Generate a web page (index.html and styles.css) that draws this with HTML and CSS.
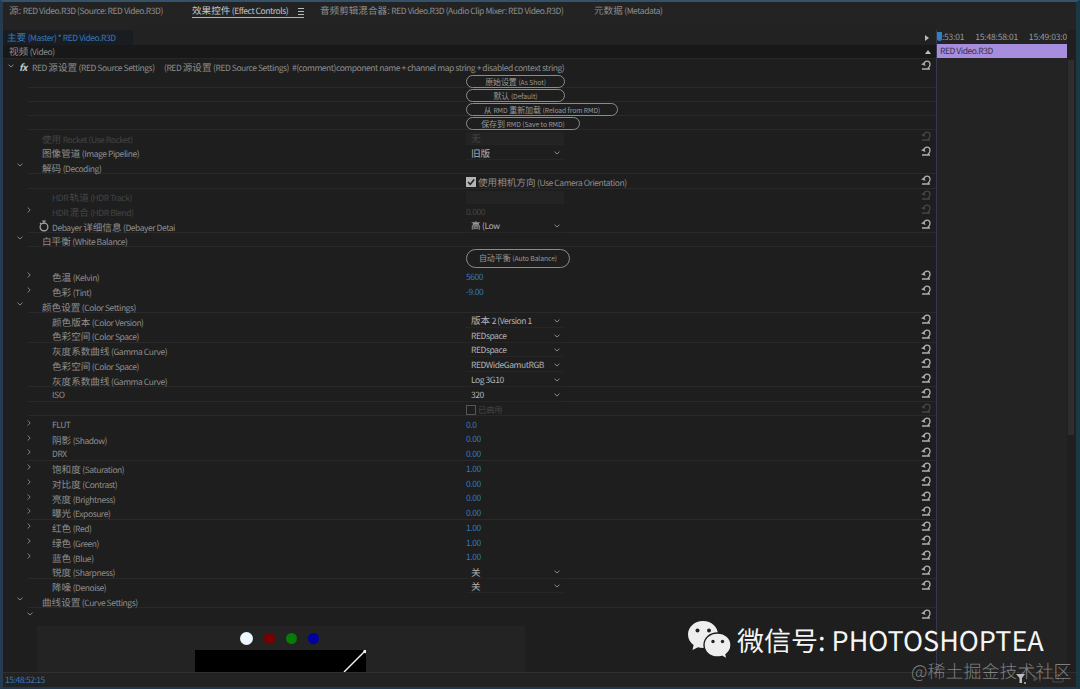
FILE: index.html
```
<!DOCTYPE html>
<html lang="zh-CN">
<head>
  <meta charset="UTF-8" />
  <meta name="viewport" content="width=device-width, initial-scale=1.0"/>
  <title>Effect Controls</title>
  <link rel="stylesheet" href="styles.css">
</head>
<body>

<!-- Shared icons -->
<svg class="defs" width="0" height="0">
  <symbol id="reset" viewBox="0 0 10 10">
    <path d="M2.6 4.4C3.2 2.2 4.4 1.2 6 1.2C8 1.2 9 2.8 9 4.6C9 6.2 8.2 7.4 6.8 8.2M1 9H9" fill="none" stroke="currentColor" stroke-width="1.3"/>
    <path d="M0 4.2L3.2 2.4L4.6 6Z" fill="currentColor"/>
  </symbol>
  <symbol id="down" viewBox="0 0 6 4"><path d="M.5 .7L3 3L5.5 .7" fill="none" stroke="currentColor"/></symbol>
  <symbol id="right" viewBox="0 0 4 6"><path d="M.7 .5L3.2 3L.7 5.5" fill="none" stroke="currentColor"/></symbol>
</svg>

<div class="app">
  <div class="tabs">
    <span class="tab tab-source"><span class="zh">源:</span> RED Video.R3D (Source: RED Video.R3D)</span>
    <span class="tab tab-effect active"><span><span class="zh">效果控件</span> (Effect Controls)</span> <b class="menu"></b></span>
    <span class="tab tab-mixer"><span class="zh">音频剪辑混合器:</span> RED Video.R3D (Audio Clip Mixer: RED Video.R3D)</span>
    <span class="tab tab-meta"><span class="zh">元数据</span> (Metadata)</span>
  </div>

  <div class="main">
    <div class="effects">
      <div class="master"><span class="clip-name"><span class="zh">主要</span> (Master) * RED Video.R3D</span><i class="tri-right"></i></div>
      <div class="video"><span><span class="zh">视频</span> (Video)</span><i class="tri-up"></i></div>
      <div class="row fx">
        <div class="label"><svg class="twirl"><use href="#down"/></svg><em>fx</em><span class="fx-name">RED <span class="zh">源设置</span> (RED Source Settings)</span><span class="fx-desc">(RED <span class="zh">源设置</span> (RED Source Settings)&nbsp; #(comment)component name + channel map string + disabled context string)</span></div>
        <svg class="reset"><use href="#reset"/></svg>
      </div>

      <!-- RMD buttons -->
      <div class="row short line"><div class="label"></div><div class="value"><button class="w98">原始设置 <small>(As Shot)</small></button></div></div>
      <div class="row short line"><div class="label"></div><div class="value"><button class="w98">默认 <small>(Default)</small></button></div></div>
      <div class="row short line"><div class="label"></div><div class="value"><button class="w151">从 <small>RMD</small> 重新加载 <small>(Reload from RMD)</small></button></div></div>
      <div class="row short line"><div class="label"></div><div class="value"><button class="w113">保存到 <small>RMD (Save to RMD)</small></button></div></div>

      <div class="group decode">
        <div class="row off"><div class="label l1"><span class="zh">使用</span> Rocket (Use Rocket)</div><div class="value"><span class="select empty"><span class="zh">无</span></span></div><svg class="reset"><use href="#reset"/></svg></div>
        <div class="row"><div class="label l1"><span class="zh">图像管道</span> (Image Pipeline)</div><div class="value"><span class="select"><span class="zh">旧版</span><svg><use href="#down"/></svg></span></div><svg class="reset"><use href="#reset"/></svg></div>
        <div class="row line"><div class="label l1"><svg class="twirl"><use href="#down"/></svg><span class="zh">解码</span> (Decoding)</div></div>
        <div class="row line"><div class="label"></div><div class="value"><i class="check on"><svg viewBox="0 0 10 10"><path d="M2 5L4.3 7.3L8.2 2.5"/></svg></i><span class="check-text"><span class="zh">使用相机方向</span> (Use Camera Orientation)</span></div><svg class="reset"><use href="#reset"/></svg></div>
        <div class="row off"><div class="label l2">HDR <span class="zh">轨道</span> (HDR Track)</div><div class="value"><span class="select empty"></span></div><svg class="reset"><use href="#reset"/></svg></div>
        <div class="row off"><div class="label l2"><svg class="twirl side"><use href="#right"/></svg>HDR <span class="zh">混合</span> (HDR Blend)</div><div class="value">0.000</div><svg class="reset"><use href="#reset"/></svg></div>
        <div class="row line"><div class="label l2"><svg class="watch" viewBox="0 0 10 12"><circle cx="5" cy="7" r="3.9"/><path d="M3.2 1H6.8M5 1V3M1 2.8L2 3.8"/></svg>Debayer <span class="zh">详细信息</span> (Debayer Detai</div><div class="value"><span class="select"><span><span class="zh">高</span> (Low</span><svg><use href="#down"/></svg></span></div><svg class="reset"><use href="#reset"/></svg></div>
        <div class="row line"><div class="label l1"><svg class="twirl"><use href="#down"/></svg><span class="zh">白平衡</span> (White Balance)</div></div>
      </div>

      <div class="row tall"><div class="label"></div><div class="value"><button class="auto">自动平衡 <small>(Auto Balance)</small></button></div></div>

      <div class="group">
        <div class="row"><div class="label l2"><svg class="twirl side"><use href="#right"/></svg><span class="zh">色温</span> (Kelvin)</div><div class="value num">5600</div><svg class="reset"><use href="#reset"/></svg></div>
        <div class="row"><div class="label l2"><svg class="twirl side"><use href="#right"/></svg><span class="zh">色彩</span> (Tint)</div><div class="value num">-9.00</div><svg class="reset"><use href="#reset"/></svg></div>
        <div class="row line"><div class="label l1"><svg class="twirl"><use href="#down"/></svg><span class="zh">颜色设置</span> (Color Settings)</div></div>
        <div class="row"><div class="label l2"><span class="zh">颜色版本</span> (Color Version)</div><div class="value"><span class="select"><span><span class="zh">版本</span> 2 (Version 1</span><svg><use href="#down"/></svg></span></div><svg class="reset"><use href="#reset"/></svg></div>
        <div class="row line"><div class="label l2"><span class="zh">色彩空间</span> (Color Space)</div><div class="value"><span class="select">REDspace<svg><use href="#down"/></svg></span></div><svg class="reset"><use href="#reset"/></svg></div>
        <div class="row"><div class="label l2"><span class="zh">灰度系数曲线</span> (Gamma Curve)</div><div class="value"><span class="select">REDspace<svg><use href="#down"/></svg></span></div><svg class="reset"><use href="#reset"/></svg></div>
        <div class="row"><div class="label l2"><span class="zh">色彩空间</span> (Color Space)</div><div class="value"><span class="select">REDWideGamutRGB<svg><use href="#down"/></svg></span></div><svg class="reset"><use href="#reset"/></svg></div>
        <div class="row line"><div class="label l2"><span class="zh">灰度系数曲线</span> (Gamma Curve)</div><div class="value"><span class="select">Log 3G10<svg><use href="#down"/></svg></span></div><svg class="reset"><use href="#reset"/></svg></div>
        <div class="row line"><div class="label l2">ISO</div><div class="value"><span class="select">320<svg><use href="#down"/></svg></span></div><svg class="reset"><use href="#reset"/></svg></div>
        <div class="row line off"><div class="label"></div><div class="value"><i class="check"></i><span class="check-text">已启用</span></div><svg class="reset"><use href="#reset"/></svg></div>
        <div class="row"><div class="label l2"><svg class="twirl side"><use href="#right"/></svg>FLUT</div><div class="value num">0.0</div><svg class="reset"><use href="#reset"/></svg></div>
        <div class="row"><div class="label l2"><svg class="twirl side"><use href="#right"/></svg><span class="zh">阴影</span> (Shadow)</div><div class="value num">0.00</div><svg class="reset"><use href="#reset"/></svg></div>
        <div class="row line"><div class="label l2"><svg class="twirl side"><use href="#right"/></svg>DRX</div><div class="value num">0.00</div><svg class="reset"><use href="#reset"/></svg></div>
        <div class="row"><div class="label l2"><svg class="twirl side"><use href="#right"/></svg><span class="zh">饱和度</span> (Saturation)</div><div class="value num">1.00</div><svg class="reset"><use href="#reset"/></svg></div>
        <div class="row"><div class="label l2"><svg class="twirl side"><use href="#right"/></svg><span class="zh">对比度</span> (Contrast)</div><div class="value num">0.00</div><svg class="reset"><use href="#reset"/></svg></div>
        <div class="row"><div class="label l2"><svg class="twirl side"><use href="#right"/></svg><span class="zh">亮度</span> (Brightness)</div><div class="value num">0.00</div><svg class="reset"><use href="#reset"/></svg></div>
        <div class="row line"><div class="label l2"><svg class="twirl side"><use href="#right"/></svg><span class="zh">曝光</span> (Exposure)</div><div class="value num">0.00</div><svg class="reset"><use href="#reset"/></svg></div>
        <div class="row"><div class="label l2"><svg class="twirl side"><use href="#right"/></svg><span class="zh">红色</span> (Red)</div><div class="value num">1.00</div><svg class="reset"><use href="#reset"/></svg></div>
        <div class="row"><div class="label l2"><svg class="twirl side"><use href="#right"/></svg><span class="zh">绿色</span> (Green)</div><div class="value num">1.00</div><svg class="reset"><use href="#reset"/></svg></div>
        <div class="row"><div class="label l2"><svg class="twirl side"><use href="#right"/></svg><span class="zh">蓝色</span> (Blue)</div><div class="value num">1.00</div><svg class="reset"><use href="#reset"/></svg></div>
        <div class="row line"><div class="label l2"><span class="zh">锐度</span> (Sharpness)</div><div class="value"><span class="select"><span class="zh">关</span><svg><use href="#down"/></svg></span></div><svg class="reset"><use href="#reset"/></svg></div>
        <div class="row"><div class="label l2"><span class="zh">降噪</span> (Denoise)</div><div class="value"><span class="select"><span class="zh">关</span><svg><use href="#down"/></svg></span></div><svg class="reset"><use href="#reset"/></svg></div>
        <div class="row line"><div class="label l1"><svg class="twirl"><use href="#down"/></svg><span class="zh">曲线设置</span> (Curve Settings)</div></div>
      </div>

      <!-- Curve editor -->
      <div class="row curve-row"><div class="label l2"><svg class="twirl"><use href="#down"/></svg></div><svg class="reset"><use href="#reset"/></svg></div>
      <div class="curve">
        <div class="dots"><i class="white"></i><i class="red"></i><i class="green"></i><i class="blue"></i></div>
        <svg class="graph" viewBox="0 0 171 22"><rect width="171" height="22"/><path d="M149 22L170 1"/><circle cx="170" cy="1.5" r="1.7"/></svg>
      </div>
    </div>

    <div class="timeline">
      <div class="ruler"><i class="playhead"></i><span>:53:01</span><span>15:48:58:01</span><span>15:49:03:0</span></div>
      <div class="clip">RED Video.R3D</div>
    </div>
    <div class="scroll"><i></i></div>
  </div>

  <div class="footer">
    <span class="time">15:48:52:15</span>
    <svg class="tools" viewBox="0 0 50 12"><path d="M0 1H9L6 5V10H3.5V5Z" fill="#bbb"/><circle cx="9" cy="10" r="1" fill="#bbb"/><path d="M18 3V8L22 5.5ZM24 2V9" fill="#4a4a4a" stroke="#4a4a4a"/><path d="M37 5V9H47V5M42 7V1M39.5 3.5L42 1L44.5 3.5" fill="none" stroke="#4a4a4a"/></svg>
  </div>
</div>

<div class="wechat">
  <svg viewBox="0 0 44 38">
    <path d="M15 0C6.5 0 0 6 0 13.5C0 18 2.2 21.5 5.6 24L4.5 29L10 26.2C11.6 26.7 13.2 27 15 27C24 27 30 20.5 30 13.5C30 6 23.5 0 15 0Z" fill="#eee"/>
    <path d="M29.5 12C21.5 12 16 17.500 16 24C16 30.500 21.500 36 29.500 36C31.200 36 32.600 35.700 34 35.300L39 38L38 33.500C41 31.200 43 28 43 24C43 17.500 37.500 12 29.500 12Z" fill="#eee" stroke="#1e1e1e" stroke-width="1.4"/>
    <g fill="#222"><circle cx="9.5" cy="9.5" r="2"/><circle cx="21" cy="9.5" r="2"/><circle cx="25" cy="20.5" r="1.7"/><circle cx="34.5" cy="20.5" r="1.7"/></g>
  </svg>
  <span>微信号: PHOTOSHOPTEA</span>
</div>
<div class="credit">@稀土掘金技术社区</div>

</body>
</html>
```

FILE: styles.css
```
* {
  box-sizing: border-box;
}

body {
  margin: 0;
  background: #1e1e1e;
  color: #8e8e8e;
  font: 8.5px/14px "Noto Sans CJK SC", sans-serif;
  letter-spacing: -.45px;
  text-rendering: geometricPrecision;
  white-space: nowrap;
  overflow: hidden;
}

.zh {
  font-size: 9.6px;
  letter-spacing: 0;
}

.defs {
  display: block;
}

.app {
  display: flex;
  flex-direction: column;
  height: 689px;
  border-style: solid;
  border-width: 2px 4px 2px 3px;
  border-color: #35526b #1c3745 #1f3850 #243b50;
}

.tabs {
  display: flex;
  height: 29px;
  padding: 1px 0 0 6px;
  background: #232323;
}

.tab {
  flex: none;
  height: 15px;
}

.tab-source { width: 183px; }
.tab-mixer { width: 274px; margin-left: 16px; }

.active {
  display: flex;
  justify-content: space-between;
  width: 112px;
  color: #c4c4c4;
  border-bottom: 1px solid #b5b5b5;
}

.menu {
  width: 6px;
  height: 7px;
  margin-top: 5px;
  border-top: 1px solid #bbb;
  border-bottom: 1px solid #bbb;
  background: linear-gradient(#bbb, #bbb) center / 100% 1px no-repeat;
}

.main {
  display: flex;
  height: 642px;
}

.effects {
  width: 934px;
  border-right: 1px solid #35364f;
}

.master,
.video {
  display: flex;
  justify-content: space-between;
  align-items: center;
}

.master {
  height: 15px;
  background: #222;
  padding-right: 7px;
}

.clip-name {
  width: 130px;
  height: 15px;
  padding-left: 4px;
  background: #191c20;
  color: #3479bd;
}

.video {
  height: 14px;
  padding: 0 5px 0 6px;
  background: #181818;
  border-bottom: 1px solid #272727;
}

.tri-right {
  border: 3px solid transparent;
  border-left: 4px solid #bbb;
  border-right: 0;
}

.tri-up {
  border: 3px solid transparent;
  border-bottom: 4px solid #bbb;
  border-top: 0;
}

.row {
  display: flex;
  height: 14.75px;
}

.decode .row {
  height: 14.65px;
}

/* separator starts under the indent */
.line {
  background: linear-gradient(#292929, #292929) 25px 100% / 100% 1px no-repeat;
}

.row.fx { height: 15px; }
.row.short { height: 14px; }
.row.tall { height: 21.4px; }

.label {
  width: 463px;
  padding-top: 1.5px;
  line-height: 14px;
}

.l1 { padding-left: 39px; }
.l2 { padding-left: 49px; }

.twirl {
  width: 6px;
  height: 4px;
  margin: 2px 19px 0 -25px;
  color: #858585;
  vertical-align: top;
}

.twirl.side {
  width: 4px;
  height: 6px;
  margin: 2px 21px 0 -25px;
}

.watch {
  width: 10px;
  height: 12px;
  margin: 0 3px 0 -13px;
  fill: none;
  stroke: #aaa;
  stroke-width: 1.2;
  vertical-align: top;
}

.fx .label {
  display: flex;
  padding: 1px 0 0 5px;
}

.fx .twirl {
  flex: none;
  margin: 4px 4px 0 0;
}

.fx em {
  flex: none;
  width: 14px;
  padding-left: 1px;
  color: #ccc;
  font-size: 9.6px;
  font-weight: bold;
}

.fx-name {
  flex: none;
  width: 132px;
}

.value {
  display: flex;
  align-items: center;
  padding-top: 2px;
}

.num {
  color: #2f78b7;
}

.reset {
  width: 10px;
  height: 10px;
  margin: 1px 5px 0 auto;
  color: #b0b0b0;
}

.off,
.off .reset {
  color: #454545;
}

button {
  height: 13px;
  padding: 0;
  border: 1px solid #8c8c8c;
  border-radius: 7px;
  background: none;
  color: #999;
  font: inherit;
  font-size: 8px;
  letter-spacing: -.1px;
  line-height: 11px;
}

small {
  font-size: 6.8px;
}

.short .value,
.tall .value {
  padding-top: 0;
}

.w98 { width: 99px; }
.w151 { width: 152px; }
.w113 { width: 114px; }

.auto {
  width: 104px;
  height: 19px;
  border-radius: 10px;
}

.select {
  display: flex;
  justify-content: space-between;
  align-items: center;
  width: 98px;
  height: 13px;
  padding: 0 4px 0 5px;
  border-bottom: 1px solid #252525;
  color: #b2b2b2;
}

.select svg {
  width: 6px;
  height: 4px;
  color: #888;
}

.select.empty {
  background: #232323;
  color: #454545;
}

.check {
  width: 10px;
  height: 10px;
  margin-right: 2px;
  border: 1px solid #555;
}

.check.on {
  border: 0;
  background: #b5b5b5;
}

.check svg {
  display: block;
  fill: none;
  stroke: #222;
  stroke-width: 1.5;
}

.row.curve-row { height: 18px; }

.curve {
  width: 488px;
  height: 46px;
  margin-left: 34px;
  background: #232323;
}

.dots {
  display: flex;
  align-items: center;
  gap: 11px;
  height: 24px;
  padding-left: 203px;
}

.dots i {
  width: 11px;
  height: 11px;
  border-radius: 50%;
}

.dots .white {
  width: 13px;
  height: 13px;
  background: #eef6ff;
}

.red { background: #780000; }
.green { background: #087a08; }
.blue { background: #00009c; }

.graph {
  display: block;
  width: 171px;
  height: 22px;
  margin-left: 158px;
  stroke: #eee;
  stroke-width: 1.5;
}

.graph rect {
  fill: #000;
  stroke: none;
}

.graph circle {
  fill: #eee;
  stroke: none;
}

.timeline {
  width: 130px;
  background: #232323;
}

.ruler {
  display: flex;
  justify-content: space-between;
  height: 14px;
  color: #999;
  letter-spacing: -.2px;
}

.playhead {
  width: 5px;
  height: 9px;
  margin: 2px -11px 0 0;
  background: #3381bc;
  border-radius: 0 0 3px 3px;
}

.clip {
  height: 14px;
  padding-left: 3px;
  background: #a78ddd;
  color: #38304a;
}

.scroll {
  flex: 1;
  padding: 30px 0 0 1px;
  background: #1f1f1f;
}

.scroll i {
  display: block;
  width: 6px;
  height: 375px;
  background: #2e2e2e;
}

.footer {
  display: flex;
  justify-content: space-between;
  flex: 1;
  border-top: 1px solid #303030;
  background: #222;
}

.time {
  padding-left: 2px;
  color: #3479b5;
}

.tools {
  width: 50px;
  height: 12px;
  margin-right: 10px;
}

/* watermarks lie over the panel */
.wechat {
  position: absolute;
  left: 688px;
  top: 620px;
  display: flex;
  align-items: center;
  color: #f5f5f5;
  font-size: 27px;
  letter-spacing: 0;
  line-height: 40px;
}

.wechat svg {
  width: 44px;
  height: 38px;
  margin-right: 5px;
}

.credit {
  position: absolute;
  left: 911px;
  top: 658px;
  color: rgba(190, 190, 190, .6);
  font-size: 18px;
  font-weight: 300;
  letter-spacing: 0;
  line-height: 26px;
}
```
